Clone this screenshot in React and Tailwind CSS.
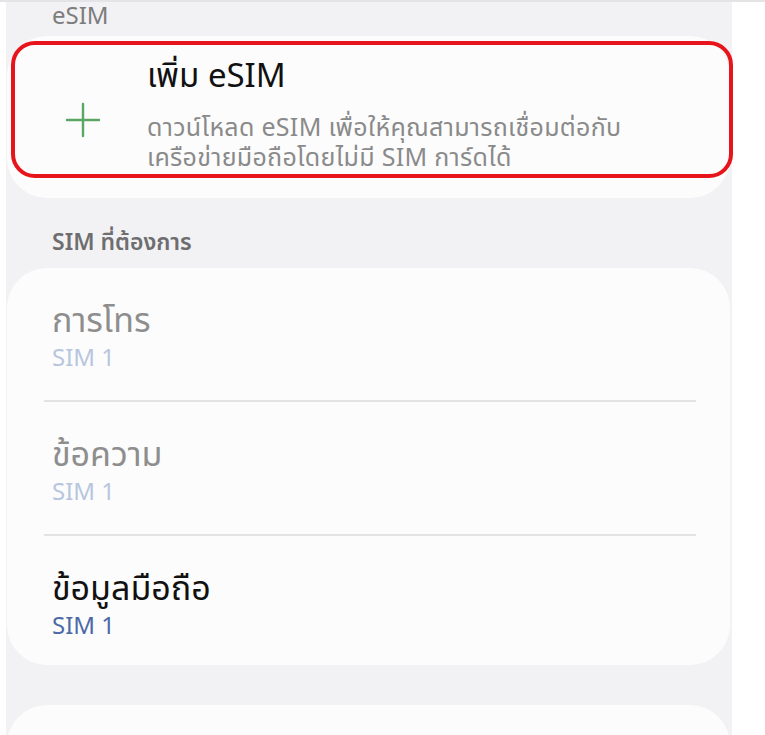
import React from 'react';

const font = { fontFamily: '"Noto Sans", Roboto, "Noto Sans Thai", sans-serif' };

const simRows = [
  { title: 'การโทร', sim: 'SIM 1', enabled: false, h: 'h-[132px]' },
  { title: 'ข้อความ', sim: 'SIM 1', enabled: false, h: 'h-[132px]' },
  { title: 'ข้อมูลมือถือ', sim: 'SIM 1', enabled: true, h: 'h-[129px]' },
];

const PlusIcon = () => (
  <svg width="36" height="36" viewBox="0 0 36 36" fill="none">
    <path d="M18 2v32M2 18h32" stroke="#5ba665" strokeWidth="2.4" strokeLinecap="round" />
  </svg>
);

const SimRow = ({ row, last }) => (
  <div>
    <div className={`${row.h} pt-[31px] pl-[45px]`}>
      <p className={`text-[34px] leading-[40px] ${row.enabled ? 'text-[#111111]' : 'text-[#8e8e8e]'}`}>
        {row.title}
      </p>
      <p className={`text-[24px] leading-[36px] ${row.enabled ? 'text-[#4d6aa6]' : 'text-[#b8c6dd]'}`}>
        {row.sim}
      </p>
    </div>
    {!last && <div className="ml-[37px] mr-[34px] h-[2px] bg-[#e3e3e5]" />}
  </div>
);

const App = () => {
  return (
    <div className="w-[765px] h-[735px] bg-white overflow-hidden border-t-2 border-[#e4e4e6]" style={font}>
      <div className="ml-[6px] w-[726px] h-full bg-[#f2f2f4] pl-[1px] pr-[2px]">
        {/* eSIM section */}
        <p className="pl-[45px] text-[24px] leading-[26px] text-[#7d7d7d]">eSIM</p>

        <div className="relative mt-[8px] h-[162px] rounded-[40px] bg-[#fcfcfd]">
          <div className="flex items-start pt-[19px]">
            <div className="w-[140px] shrink-0 pl-[58px] pt-[47px]">
              <PlusIcon />
            </div>
            <div>
              <p className="text-[33px] leading-[40px] text-[#111111]">เพิ่ม eSIM</p>
              <p className="mt-[16px] text-[25px] leading-[30px] tracking-[0.3px] text-[#8a8a8a] whitespace-nowrap">
                ดาวน์โหลด eSIM เพื่อให้คุณสามารถเชื่อมต่อกับ
              </p>
              <p className="text-[25px] leading-[30px] tracking-[0.3px] text-[#8a8a8a] whitespace-nowrap">
                เครือข่ายมือถือโดยไม่มี SIM การ์ดได้
              </p>
            </div>
          </div>
          {/* red highlight annotation */}
          <div className="absolute left-[4px] top-[5px] w-[722px] h-[137px] rounded-[24px] border-[4px] border-[#e8141b]" />
        </div>

        {/* preferred SIM section */}
        <p className="pl-[45px] pt-[30px] pb-[14px] text-[23px] leading-[26px] font-semibold text-[#6e6e70]">
          SIM ที่ต้องการ
        </p>

        <div className="rounded-[40px] bg-[#fcfcfd]">
          {simRows.map((row, i) => (
            <SimRow key={row.title} row={row} last={i === simRows.length - 1} />
          ))}
        </div>

        <div className="mt-[40px] h-[80px] rounded-[40px] bg-[#fcfcfd]" />
      </div>
    </div>
  );
};

export default App;
